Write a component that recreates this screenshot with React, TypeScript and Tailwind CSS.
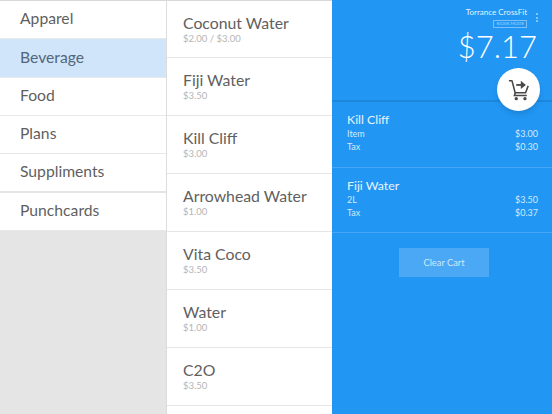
const categories = [
  { name: 'Apparel', h: 'h-[38px]' },
  { name: 'Beverage', h: 'h-[39px]', active: true },
  { name: 'Food', h: 'h-[38px]' },
  { name: 'Plans', h: 'h-[38px]' },
  { name: 'Suppliments', h: 'h-[39px]', thick: true },
  { name: 'Punchcards', h: 'h-[38px]' },
];

const products = [
  { name: 'Coconut Water', price: '$2.00 / $3.00' },
  { name: 'Fiji Water', price: '$3.50' },
  { name: 'Kill Cliff', price: '$3.00' },
  { name: 'Arrowhead Water', price: '$1.00' },
  { name: 'Vita Coco', price: '$3.50' },
  { name: 'Water', price: '$1.00' },
  { name: 'C2O', price: '$3.50' },
];

const cart = [
  { name: 'Kill Cliff', label: 'Item', price: '$3.00', tax: '$0.30', size: 'h-[66px] pt-[10px]' },
  { name: 'Fiji Water', label: '2L', price: '$3.50', tax: '$0.37', size: 'h-[65px] pt-[10px]' },
];

function CartIcon() {
  return (
    <svg width="22" height="22" viewBox="0 0 24 24" fill="none" stroke="#484848" strokeWidth="1.7">
      <path d="M1 2h3.4l3.4 13h11.4l2.8-7.5" strokeLinejoin="round" />
      <path d="M8 15l-1 3h13.5" />
      <circle cx="9" cy="21.5" r="1.8" fill="#484848" stroke="none" />
      <circle cx="18.5" cy="21.5" r="1.8" fill="#484848" stroke="none" />
      <path d="M9 6.5h6" strokeWidth="2" />
      <path d="M14 2l5.5 4.5-5.5 4.5z" fill="#484848" stroke="none" />
    </svg>
  );
}

export default function App() {
  return (
    <div className="flex h-[414px] w-[552px] overflow-hidden bg-white font-['Lato','Liberation_Sans',sans-serif]">
      <div className="flex h-full w-[167px] shrink-0 flex-col border-r border-r-[#dcdcdc] bg-[#e5e5e6]">
        <div className="border-t border-t-[#d8d8d8] bg-white">
          {categories.map((c) => (
            <div
              key={c.name}
              className={`flex items-center pb-[1px] pl-5 text-[15.7px] ${c.h} ${
                c.active ? 'bg-[#d0e5f9] text-[#51657c]' : 'text-[#5f5f5f]'
              } ${c.thick ? 'border-b-2 border-b-[#e4e4e4]' : 'border-b border-b-[#e8e8e8]'}`}
            >
              {c.name}
            </div>
          ))}
        </div>
      </div>

      <div className="h-full w-[165px] shrink-0 border-t border-t-[#d8d8d8] bg-white">
        {products.map((p, i) => (
          <div
            key={p.name}
            className={`flex flex-col justify-center border-b border-b-[#e6e6e6] pb-[3px] pl-4 ${i === 0 ? 'h-[57px] pt-[1px]' : 'h-[58px]'}`}
          >
            <div className="text-[15.8px] leading-[20px] text-[#5f5f5f]">{p.name}</div>
            <div className="mt-[1px] text-[9.5px] leading-[10px] text-[#b5b5b5]">{p.price}</div>
          </div>
        ))}
      </div>

      <div className="relative h-full flex-1 bg-[#2196f3] text-white">
        <div className="flex h-[102px] flex-col items-end border-b-2 border-b-[#1c86dc] pr-[25px] pt-[7px]">
          <div className="text-[8px] leading-[11px] text-[#e3f2fd]">Torrance CrossFit</div>
          <div className="mt-[2px] border border-[#7cc0f7] px-[2px] text-[4.4px] leading-[6px] text-[#a9d6fa]">KIOSK MODE</div>
          <div className="-mr-[10px] -mt-[2px] text-[31px] font-light leading-[40px]">$7.17</div>
        </div>

        <div className="absolute right-[14px] top-[13px] flex flex-col gap-[1.5px]">
          <span className="h-[2px] w-[2px] rounded-full bg-[#a5d4fa]" />
          <span className="h-[2px] w-[2px] rounded-full bg-[#a5d4fa]" />
          <span className="h-[2px] w-[2px] rounded-full bg-[#a5d4fa]" />
        </div>

        <div className="absolute right-[12px] top-[68px] flex h-[43px] w-[43px] items-center justify-center rounded-full bg-white shadow-md">
          <CartIcon />
        </div>

        {cart.map((item) => (
          <div key={item.name} className={`border-b border-b-[#45a7f5] pl-[15px] pr-[14px] ${item.size}`}>
            <div className="text-[12.3px] leading-[16px] text-[#e8f4fe]">{item.name}</div>
            <div className="-mt-[1px] flex justify-between text-[9px] leading-[13px] text-[#d3eafd]">
              <span>{item.label}</span>
              <span>{item.price}</span>
            </div>
            <div className="flex justify-between text-[9px] leading-[13px] text-[#d3eafd]">
              <span>Tax</span>
              <span>{item.tax}</span>
            </div>
          </div>
        ))}

        <div className="flex justify-center pl-[4px] pt-[15px]">
          <div className="flex h-[29px] w-[90px] items-center justify-center bg-[#4aa8f5] text-[9.3px] text-[#cfe8fc]">
            Clear Cart
          </div>
        </div>
      </div>
    </div>
  );
}
